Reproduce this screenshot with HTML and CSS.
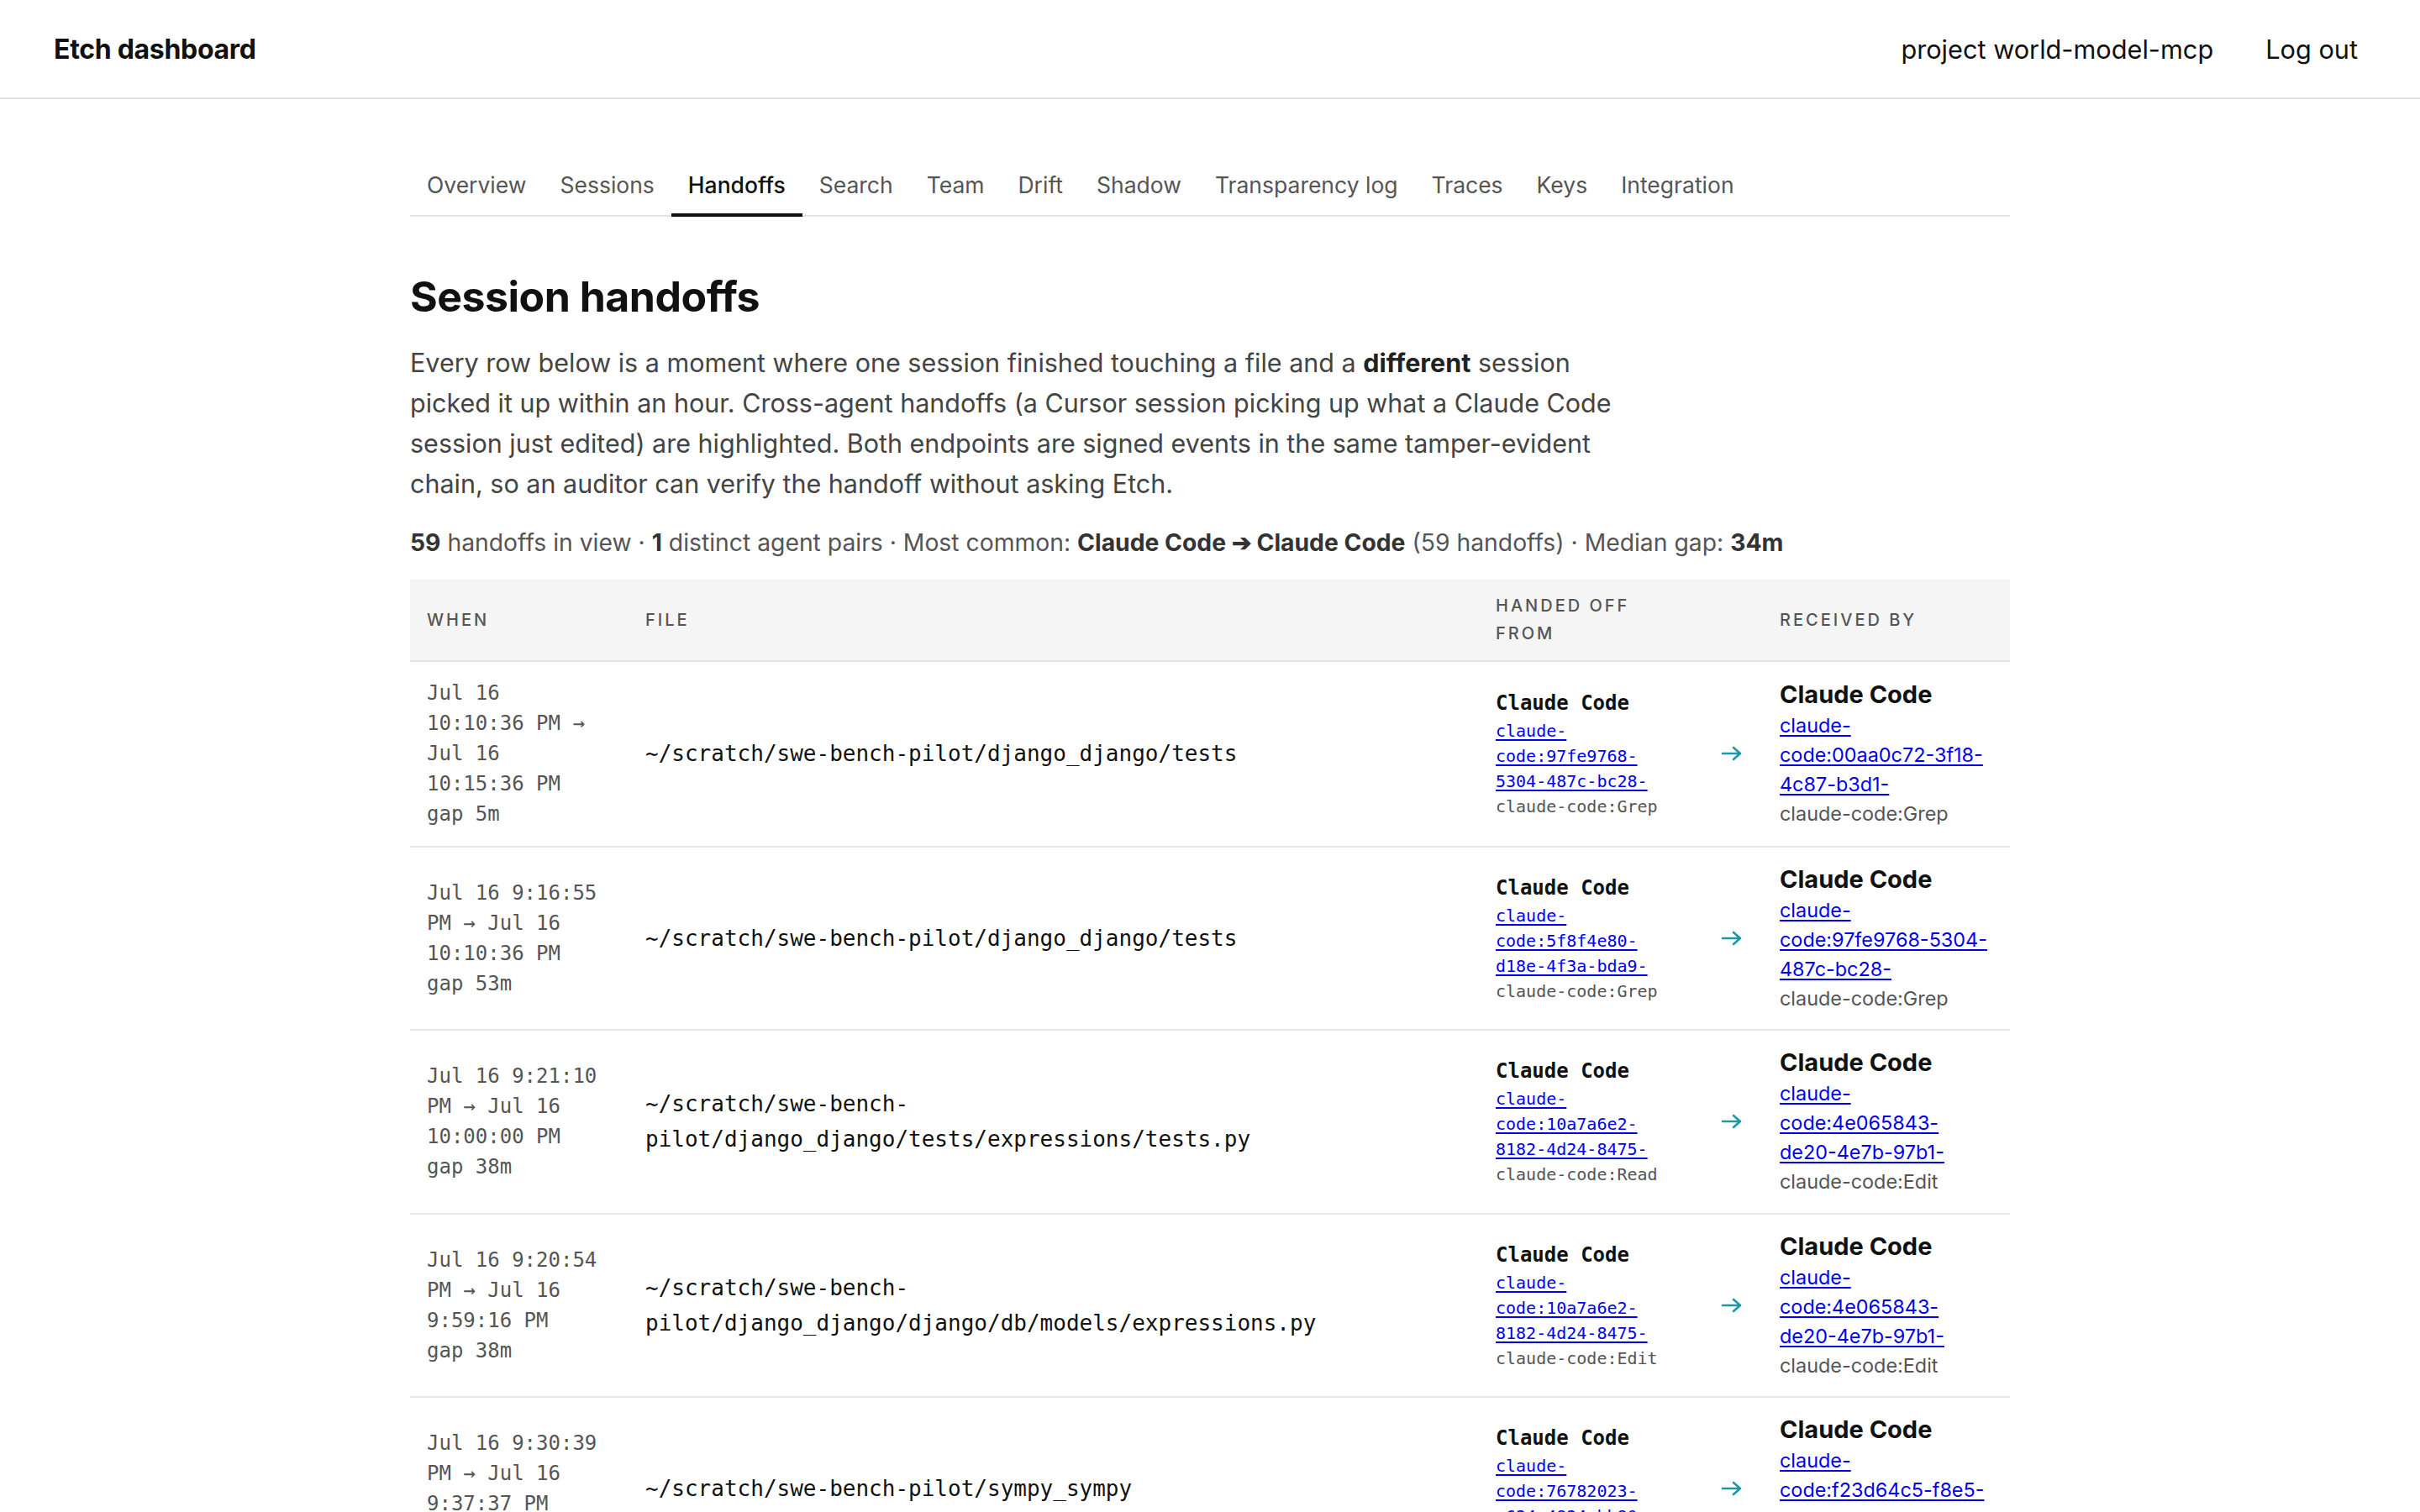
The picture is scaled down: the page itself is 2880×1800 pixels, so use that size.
FILE: index.html
```html
<!DOCTYPE html>
<html lang="en">
<head>
  <meta charset="UTF-8" />
  <meta name="viewport" content="width=device-width, initial-scale=1.0"/>
  <title>Etch dashboard - Handoffs</title>
  <link rel="stylesheet" href="styles.css">
</head>
<body>
  <header class="topbar">
    <a class="brand" href="#">Etch dashboard</a>
    <div class="topbar-right">
      <span class="project">project world-model-mcp</span>
      <a class="logout" href="#">Log out</a>
    </div>
  </header>

  <main class="page">
    <nav class="tabs">
      <a href="#">Overview</a>
      <a href="#">Sessions</a>
      <a href="#" class="active">Handoffs</a>
      <a href="#">Search</a>
      <a href="#">Team</a>
      <a href="#">Drift</a>
      <a href="#">Shadow</a>
      <a href="#">Transparency log</a>
      <a href="#">Traces</a>
      <a href="#">Keys</a>
      <a href="#">Integration</a>
    </nav>

    <h1>Session handoffs</h1>
    <p class="intro">
      Every row below is a moment where one session finished touching a file and a <strong>different</strong> session
      picked it up within an hour. Cross-agent handoffs (a Cursor session picking up what a Claude Code
      session just edited) are highlighted. Both endpoints are signed events in the same tamper-evident
      chain, so an auditor can verify the handoff without asking Etch.
    </p>
    <p class="stats">
      <strong>59</strong> handoffs in view &middot; <strong>1</strong> distinct agent pairs &middot; Most common:
      <strong>Claude Code &#10132; Claude Code</strong> (59 handoffs) &middot; Median gap: <strong>34m</strong>
    </p>

    <table class="handoffs">
      <colgroup>
        <col class="c-when">
        <col class="c-file">
        <col class="c-from">
        <col class="c-arrow">
        <col class="c-to">
      </colgroup>
      <thead>
        <tr>
          <th>When</th>
          <th>File</th>
          <th>Handed off from</th>
          <th></th>
          <th>Received by</th>
        </tr>
      </thead>
      <tbody>
        <tr>
          <td class="when">Jul 16 10:10:36 PM &rarr; Jul 16 10:15:36 PM<div>gap 5m</div></td>
          <td class="file">~/scratch/swe-bench-pilot/django_django/tests</td>
          <td class="from">
            <div class="agent">Claude Code</div>
            <a href="#">claude-code:97fe9768-5304-487c-bc28-</a>
            <div class="tool">claude-code:Grep</div>
          </td>
          <td class="arrow"><svg viewBox="0 0 26 20" width="26" height="20"><path d="M2 10h21M15 3l8 7-8 7" fill="none" stroke="currentColor" stroke-width="2.6" stroke-linecap="round" stroke-linejoin="round"/></svg></td>
          <td class="to">
            <div class="agent">Claude Code</div>
            <a href="#">claude-code:00aa0c72-3f18-4c87-b3d1-</a>
            <div class="tool">claude-code:Grep</div>
          </td>
        </tr>
        <tr>
          <td class="when">Jul 16 9:16:55 PM &rarr; Jul 16 10:10:36 PM<div>gap 53m</div></td>
          <td class="file">~/scratch/swe-bench-pilot/django_django/tests</td>
          <td class="from">
            <div class="agent">Claude Code</div>
            <a href="#">claude-code:5f8f4e80-d18e-4f3a-bda9-</a>
            <div class="tool">claude-code:Grep</div>
          </td>
          <td class="arrow"><svg viewBox="0 0 26 20" width="26" height="20"><path d="M2 10h21M15 3l8 7-8 7" fill="none" stroke="currentColor" stroke-width="2.6" stroke-linecap="round" stroke-linejoin="round"/></svg></td>
          <td class="to">
            <div class="agent">Claude Code</div>
            <a href="#">claude-code:97fe9768-5304-487c-bc28-</a>
            <div class="tool">claude-code:Grep</div>
          </td>
        </tr>
        <tr>
          <td class="when">Jul 16 9:21:10 PM &rarr; Jul 16 10:00:00 PM<div>gap 38m</div></td>
          <td class="file">~/scratch/swe-bench-pilot/django_django/tests/expressions/tests.py</td>
          <td class="from">
            <div class="agent">Claude Code</div>
            <a href="#">claude-code:10a7a6e2-8182-4d24-8475-</a>
            <div class="tool">claude-code:Read</div>
          </td>
          <td class="arrow"><svg viewBox="0 0 26 20" width="26" height="20"><path d="M2 10h21M15 3l8 7-8 7" fill="none" stroke="currentColor" stroke-width="2.6" stroke-linecap="round" stroke-linejoin="round"/></svg></td>
          <td class="to">
            <div class="agent">Claude Code</div>
            <a href="#">claude-code:4e065843-de20-4e7b-97b1-</a>
            <div class="tool">claude-code:Edit</div>
          </td>
        </tr>
        <tr>
          <td class="when">Jul 16 9:20:54 PM &rarr; Jul 16 9:59:16 PM<div>gap 38m</div></td>
          <td class="file">~/scratch/swe-bench-pilot/django_django/django/db/models/expressions.py</td>
          <td class="from">
            <div class="agent">Claude Code</div>
            <a href="#">claude-code:10a7a6e2-8182-4d24-8475-</a>
            <div class="tool">claude-code:Edit</div>
          </td>
          <td class="arrow"><svg viewBox="0 0 26 20" width="26" height="20"><path d="M2 10h21M15 3l8 7-8 7" fill="none" stroke="currentColor" stroke-width="2.6" stroke-linecap="round" stroke-linejoin="round"/></svg></td>
          <td class="to">
            <div class="agent">Claude Code</div>
            <a href="#">claude-code:4e065843-de20-4e7b-97b1-</a>
            <div class="tool">claude-code:Edit</div>
          </td>
        </tr>
        <tr>
          <td class="when">Jul 16 9:30:39 PM &rarr; Jul 16 9:37:37 PM<div>gap 7m</div></td>
          <td class="file">~/scratch/swe-bench-pilot/sympy_sympy</td>
          <td class="from">
            <div class="agent">Claude Code</div>
            <a href="#">claude-code:76782023-a634-4834-bb80-</a>
            <div class="tool">claude-code:Edit</div>
          </td>
          <td class="arrow"><svg viewBox="0 0 26 20" width="26" height="20"><path d="M2 10h21M15 3l8 7-8 7" fill="none" stroke="currentColor" stroke-width="2.6" stroke-linecap="round" stroke-linejoin="round"/></svg></td>
          <td class="to">
            <div class="agent">Claude Code</div>
            <a href="#">claude-code:f23d64c5-f8e5-4a1b-9c02-</a>
            <div class="tool">claude-code:Edit</div>
          </td>
        </tr>
      </tbody>
    </table>
  </main>
</body>
</html>
```

FILE: styles.css
```css
* {
  box-sizing: border-box;
}

body {
  margin: 0;
  background: #fff;
  color: #111;
  font-family: Inter, "Liberation Sans", sans-serif;
}

a {
  color: inherit;
  text-decoration: none;
}

.topbar {
  display: flex;
  align-items: center;
  justify-content: space-between;
  height: 118px;
  padding: 0 74px 0 64px;
  border-bottom: 2px solid #e2e2e2;
}

.brand {
  font-size: 32px;
  font-weight: 700;
  letter-spacing: -0.3px;
}

.topbar-right {
  display: flex;
  align-items: center;
  gap: 62px;
  font-size: 30.7px;
}

.page {
  max-width: 1904px;
  margin: 0 auto;
  padding: 66px 0 0;
}

.tabs {
  display: flex;
  border-bottom: 2px solid #e2e2e2;
}

.tabs a {
  padding: 18px 20px;
  font-size: 26.5px;
  line-height: 36px;
  color: #555;
}

.tabs a.active {
  color: #111;
  font-weight: 500;
  border-bottom: 4px solid #111;
  margin-bottom: -2px;
  padding-bottom: 16px;
}

h1 {
  margin: 66px 0 26px;
  font-size: 50px;
  line-height: 58px;
  font-weight: 700;
  letter-spacing: -0.5px;
}

.intro {
  max-width: 1440px;
  margin: 0;
  font-size: 30.5px;
  line-height: 48px;
  color: #444;
}

.intro strong {
  color: #222;
}

.stats {
  margin: 22px 0 20px;
  font-size: 28.3px;
  line-height: 48px;
  color: #555;
}

.stats strong {
  color: #333;
}

.handoffs {
  width: 100%;
  table-layout: fixed;
  border-collapse: collapse;
}

.c-when { width: 260px; }
.c-file { width: 1012px; }
.c-from { width: 250px; }
.c-arrow { width: 88px; }
.c-to { width: 294px; }

.handoffs th {
  background: #f5f5f5;
  padding: 15px 20px;
  text-align: left;
  vertical-align: middle;
  font-size: 20px;
  line-height: 33px;
  font-weight: 500;
  letter-spacing: 3px;
  text-transform: uppercase;
  color: #555;
  border-bottom: 2px solid #e2e2e2;
}

.handoffs td {
  padding: 19px 20px 19.5px;
  vertical-align: middle;
  border-bottom: 2px solid #e8e8e8;
}

.handoffs td.when {
  padding-right: 30px;
  font-family: "DejaVu Sans Mono", "Liberation Mono", monospace;
  font-size: 24px;
  line-height: 36px;
  color: #555;
}

.handoffs td.file {
  font-family: "DejaVu Sans Mono", "Liberation Mono", monospace;
  font-size: 26px;
  line-height: 42px;
  color: #111;
}

.from {
  font-family: "DejaVu Sans Mono", "Liberation Mono", monospace;
  font-size: 20px;
  line-height: 30px;
}

.from .agent {
  font-size: 24px;
  line-height: 36px;
  font-weight: 700;
}

.from a,
.to a {
  display: block;
  color: #0000ee;
  text-decoration: underline;
  text-underline-offset: 3px;
}

.tool {
  color: #555;
}

.handoffs td.arrow {
  padding: 0 20px 0 38px;
  color: #1d97a8;
}

.arrow svg {
  display: block;
}

.to {
  font-size: 23.4px;
  line-height: 35px;
}

.to .agent {
  font-size: 29px;
  line-height: 38px;
  font-weight: 700;
}
```
